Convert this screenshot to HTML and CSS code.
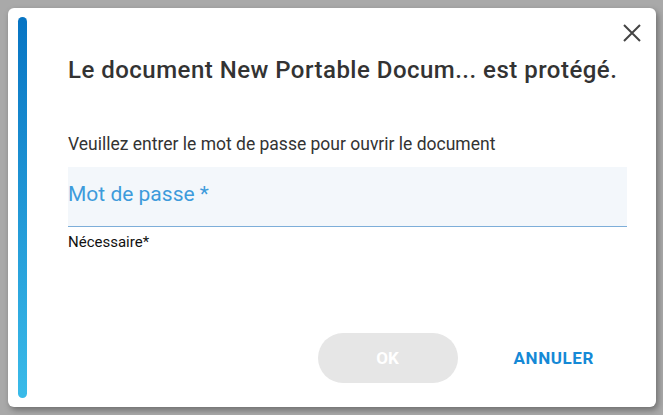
FILE: index.html
```html
<!DOCTYPE html>
<html lang="fr">
<head>
<meta charset="utf-8">
<link rel="stylesheet" href="styles.css">
</head>
<body>
<div class="dialog">
  <div class="accent"></div>
  <div class="content">
    <h1 class="title">Le document New Portable Docum... est protégé.</h1>
    <p class="prompt">Veuillez entrer le mot de passe pour ouvrir le document</p>
    <div class="field"><span class="placeholder">Mot de passe *</span></div>
    <div class="hint">Nécessaire*</div>
    <div class="actions">
      <button class="btn-ok">OK</button>
      <button class="btn-cancel">ANNULER</button>
    </div>
  </div>
  <button class="close" aria-label="Fermer">
    <svg width="18" height="18" viewBox="0 0 18 18"><path d="M1 1L17 17M17 1L1 17" stroke="#444" stroke-width="2" fill="none"/></svg>
  </button>
</div>
</body>
</html>
```
FILE: styles.css
```css
html, body { margin: 0; padding: 0; }
body {
  background: #a9a9a9;
  width: 663px;
  height: 415px;
  overflow: hidden;
  font-family: Roboto, "Liberation Sans", sans-serif;
  padding: 8px 0 0 8px;
  box-sizing: border-box;
}
.dialog {
  position: relative;
  width: 648px;
  height: 399px;
  background: #fff;
  border-radius: 6px;
  box-shadow: 2px 3px 6px rgba(0,0,0,0.35);
  display: flex;
  padding: 9px 29px 9px 10px;
  box-sizing: border-box;
}
.accent {
  width: 9px;
  flex: none;
  border-radius: 5px;
  background: linear-gradient(to bottom, #0774c3, #3abbe9);
}
.content {
  flex: 1;
  margin-left: 41px;
  display: flex;
  flex-direction: column;
}
.title {
  margin: 38px 0 0;
  font-size: 24px;
  font-weight: 500;
  color: #333;
  line-height: 30px;
  letter-spacing: 0.48px;
  white-space: nowrap;
}
.prompt {
  margin: 49px 0 0;
  font-size: 17.5px;
  color: #333;
  line-height: 20px;
  white-space: nowrap;
}
.field {
  margin-top: 13px;
  background: #f3f7fb;
  border-bottom: 1px solid #7daed9;
  display: flex;
  align-items: center;
  padding-bottom: 6px;
  box-sizing: border-box;
  height: 60px;
}
.placeholder {
  font-size: 21px;
  color: #3d9bdb;
}
.hint {
  margin-top: 6px;
  font-size: 15px;
  color: #111;
  line-height: 18px;
}
.actions {
  margin-top: auto;
  margin-bottom: 15px;
  display: flex;
  justify-content: flex-end;
  align-items: center;
  gap: 56px;
  padding-right: 33px;
}
.btn-ok {
  width: 140px;
  height: 50px;
  border: none;
  border-radius: 25px;
  background: #e6e6e6;
  color: #fff;
  font-family: inherit;
  font-size: 17px;
  font-weight: 700;
}
.btn-cancel {
  border: none;
  background: none;
  padding: 0;
  color: #1589d6;
  font-family: inherit;
  font-size: 17px;
  font-weight: 700;
  letter-spacing: 0.6px;
}
.close {
  position: absolute;
  top: 16px;
  right: 15px;
  border: none;
  background: none;
  padding: 0;
  width: 18px;
  height: 18px;
}
.close svg { display: block; }
```
